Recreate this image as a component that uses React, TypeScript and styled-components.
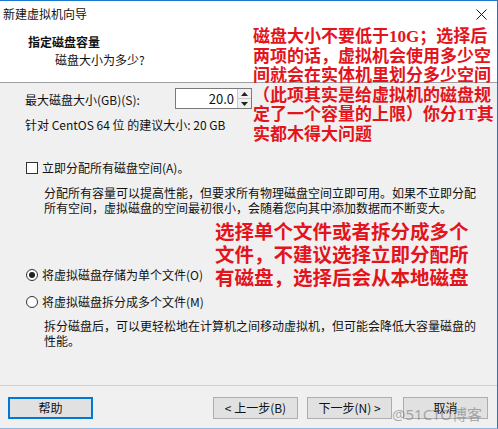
import React from 'react';
import styled, { createGlobalStyle } from 'styled-components';

const GlobalStyle = createGlobalStyle`
  html, body {
    margin: 0;
    padding: 0;
    background: #f0f0f0;
  }
  * {
    box-sizing: border-box;
  }
`;

const noteLines1 = [
  '分配所有容量可以提高性能，但要求所有物理磁盘空间立即可用。如果不立即分配',
  '所有空间，虚拟磁盘的空间最初很小，会随着您向其中添加数据而不断变大。',
];

const noteLines2 = [
  '拆分磁盘后，可以更轻松地在计算机之间移动虚拟机，但可能会降低大容量磁盘的',
  '性能。',
];

const tipLines1 = [
  '磁盘大小不要低于10G；选择后',
  '两项的话，虚拟机会使用多少空',
  '间就会在实体机里划分多少空间',
  '（此项其实是给虚拟机的磁盘规',
  '定了一个容量的上限）你分1T其',
  '实都木得大问题',
];

const tipLines2 = [
  '选择单个文件或者拆分成多个',
  '文件，不建议选择立即分配所',
  '有磁盘，选择后会从本地磁盘',
];

const App: React.FC = () => {
  return (
    <>
      <GlobalStyle />
      <Window>
        <HeaderPanel>
          <TitleBar>
            <TitleText>新建虚拟机向导</TitleText>
            <CloseButton>
              <svg width="11" height="11" viewBox="0 0 11 11">
                <path d="M0.5 0.5 L10.5 10.5 M10.5 0.5 L0.5 10.5" stroke="#111" strokeWidth="1" />
              </svg>
            </CloseButton>
          </TitleBar>
          <HeaderTitle>指定磁盘容量</HeaderTitle>
          <HeaderSubtitle>磁盘大小为多少?</HeaderSubtitle>
        </HeaderPanel>

        <Body>
          <SizeRow>
            <Label>最大磁盘大小(GB)(S):</Label>
            <SpinBox>
              <SpinValue>20.0</SpinValue>
              <SpinButtons>
                <SpinArrow>
                  <svg width="7" height="4" viewBox="0 0 7 4">
                    <path d="M0 4 L3.5 0 L7 4 Z" fill="#222" />
                  </svg>
                </SpinArrow>
                <SpinArrow>
                  <svg width="7" height="4" viewBox="0 0 7 4">
                    <path d="M0 0 L3.5 4 L7 0 Z" fill="#222" />
                  </svg>
                </SpinArrow>
              </SpinButtons>
            </SpinBox>
          </SizeRow>
          <Hint>针对 CentOS 64 位 的建议大小: 20 GB</Hint>

          <OptionRow top={27}>
            <CheckBox />
            <span>立即分配所有磁盘空间(A)。</span>
          </OptionRow>
          <Note top={9}>
            {noteLines1.map((line) => (
              <div key={line}>{line}</div>
            ))}
          </Note>

          <OptionRow top={52}>
            <Radio checked />
            <span>将虚拟磁盘存储为单个文件(O)</span>
          </OptionRow>
          <OptionRow top={11}>
            <Radio />
            <span>将虚拟磁盘拆分成多个文件(M)</span>
          </OptionRow>
          <Note top={8}>
            {noteLines2.map((line) => (
              <div key={line}>{line}</div>
            ))}
          </Note>
        </Body>

        <Footer>
          <Button focused>帮助</Button>
          <NavGroup>
            <Button>&lt; 上一步(B)</Button>
            <Button>下一步(N) &gt;</Button>
          </NavGroup>
          <CancelButton>取消</CancelButton>
        </Footer>

        <Annotation left={253} top={26} size={17} lineHeight={19.5}>
          {tipLines1.map((line) => (
            <div key={line}>{line}</div>
          ))}
        </Annotation>
        <Annotation left={215} top={220} size={19.5} lineHeight={23}>
          {tipLines2.map((line) => (
            <div key={line}>{line}</div>
          ))}
        </Annotation>
        <Watermark>@51CTO博客</Watermark>
      </Window>
    </>
  );
};

const Window = styled.div`
  position: relative;
  width: 498px;
  height: 429px;
  display: flex;
  flex-direction: column;
  background: #f0f0f0;
  border-top: 1px solid #1b78d0;
  border-right: 1px solid #1b78d0;
  border-bottom: 1px solid #8fb8e0;
  font-family: 'Noto Sans CJK SC', 'Noto Sans', sans-serif;
  font-size: 12px;
  color: #111;
  overflow: hidden;
`;

const HeaderPanel = styled.div`
  height: 82px;
  background: #fff;
  border-bottom: 1px solid #a0a0a0;
  display: flex;
  flex-direction: column;
`;

const TitleBar = styled.div`
  height: 25px;
  display: flex;
  align-items: center;
  justify-content: space-between;
  padding: 0 10px 0 3px;
`;

const TitleText = styled.span`
  font-size: 12px;
  line-height: 16px;
`;

const CloseButton = styled.span`
  display: flex;
  align-items: center;
  margin-top: 2px;
`;

const HeaderTitle = styled.div`
  margin: 8px 0 0 28px;
  font-weight: 700;
  line-height: 16px;
`;

const HeaderSubtitle = styled.div`
  margin: 2px 0 0 55px;
  line-height: 16px;
`;

const Body = styled.div`
  flex: 1;
  display: flex;
  flex-direction: column;
  align-items: flex-start;
  padding: 5px 0 0 25px;
`;

const SizeRow = styled.div`
  display: flex;
  align-items: center;
  height: 21px;
  width: 227px;
  justify-content: space-between;
`;

const Label = styled.span`
  line-height: 16px;
  margin-top: 2px;
`;

const SpinBox = styled.div`
  display: flex;
  height: 21px;
  width: 77px;
  border: 1px solid #7a7a7a;
  background: #fff;
`;

const SpinValue = styled.div`
  flex: 1;
  display: flex;
  align-items: center;
  justify-content: flex-end;
  padding-right: 3px;
  font-size: 13px;
`;

const SpinButtons = styled.div`
  width: 14px;
  display: flex;
  flex-direction: column;
  border-left: 1px solid #c8c8c8;
  background: #f0f0f0;
`;

const SpinArrow = styled.div`
  flex: 1;
  display: flex;
  align-items: center;
  justify-content: center;
  & + & {
    border-top: 1px solid #c8c8c8;
  }
`;

const Hint = styled.div`
  margin-top: 8px;
  line-height: 16px;
`;

const OptionRow = styled.div<{ top: number }>`
  display: flex;
  align-items: center;
  gap: 4px;
  margin-top: ${({ top }) => top}px;
  line-height: 16px;
  height: 16px;
`;

const CheckBox = styled.span`
  width: 12px;
  height: 12px;
  margin-left: 1px;
  border: 1px solid #333;
  background: #fff;
`;

const Radio = styled.span<{ checked?: boolean }>`
  position: relative;
  width: 12px;
  height: 12px;
  margin-left: 1px;
  border-radius: 50%;
  border: 1px solid #333;
  background: #fff;

  &::after {
    content: '';
    display: ${({ checked }) => (checked ? 'block' : 'none')};
    position: absolute;
    left: 2px;
    top: 2px;
    width: 6px;
    height: 6px;
    border-radius: 50%;
    background: #222;
  }
`;

const Note = styled.div<{ top: number }>`
  margin-top: ${({ top }) => top}px;
  padding-left: 19px;
  line-height: 15px;
  white-space: nowrap;
`;

const Footer = styled.div`
  height: 43px;
  display: flex;
  align-items: flex-start;
  padding: 11px 9px 0 8px;
  border-top: 1px solid #d0d0d0;
`;

const Button = styled.div<{ focused?: boolean }>`
  width: 85px;
  height: 22px;
  display: flex;
  align-items: center;
  justify-content: center;
  background: #e1e1e1;
  border: ${({ focused }) => (focused ? '2px solid #0078d7' : '1px solid #adadad')};
  line-height: 16px;
`;

const NavGroup = styled.div`
  margin-left: auto;
  display: flex;
  gap: 9px;
`;

const CancelButton = styled(Button)`
  margin-left: 11px;
`;

const Annotation = styled.div<{ left: number; top: number; size: number; lineHeight: number }>`
  position: absolute;
  left: ${({ left }) => left}px;
  top: ${({ top }) => top}px;
  font-family: 'Liberation Serif', 'Noto Sans CJK SC', serif;
  font-size: ${({ size }) => size}px;
  line-height: ${({ lineHeight }) => lineHeight}px;
  font-weight: 700;
  color: #e3141c;
  white-space: nowrap;
`;

const Watermark = styled.div`
  position: absolute;
  left: 392px;
  top: 403px;
  font-family: 'Noto Sans', 'Noto Sans CJK SC', sans-serif;
  font-size: 15px;
  line-height: 20px;
  color: rgba(110, 110, 110, 0.55);
  white-space: nowrap;
`;

export default App;
